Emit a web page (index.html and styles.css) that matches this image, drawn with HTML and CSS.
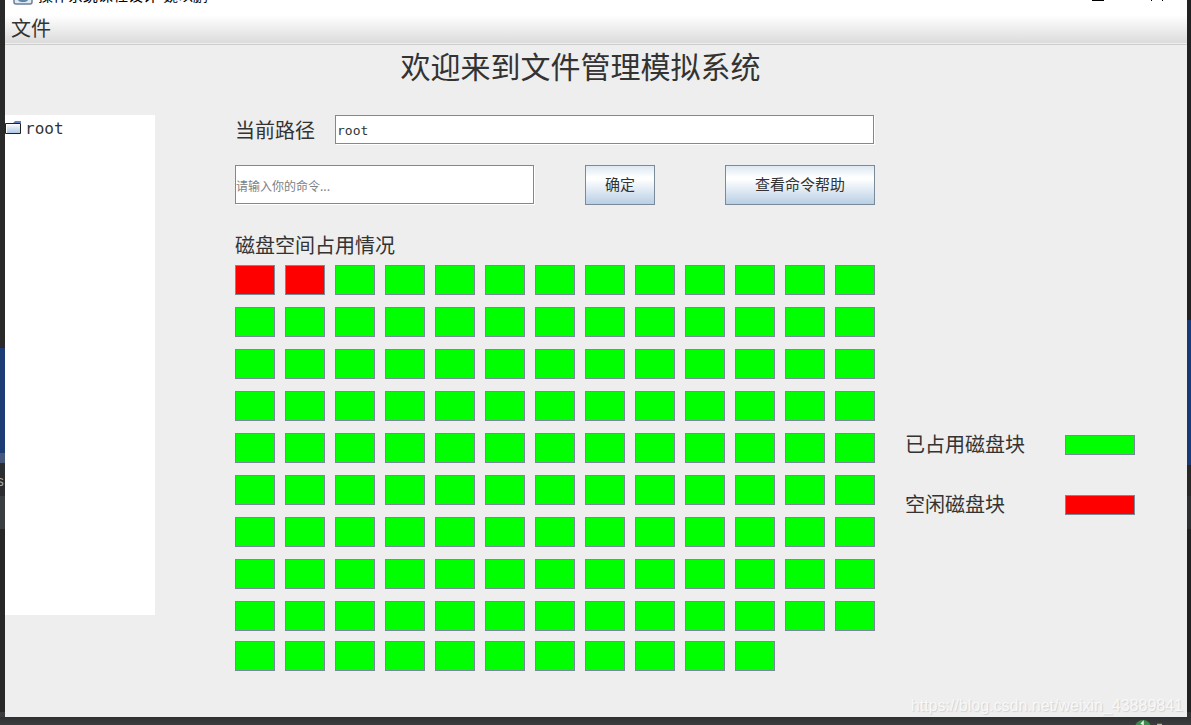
FILE: index.html
```html
<!DOCTYPE html>
<html lang="zh-CN">
<head>
<meta charset="utf-8">
<title>文件管理模拟系统</title>
<link rel="stylesheet" href="styles.css">
</head>
<body>
<div class="desktop">
  <div class="edge edge-left"><span class="edge-char">s</span></div>
  <div class="window">
    <header class="titlebar">
      <svg class="app-icon" width="20" height="20" viewBox="0 0 20 20"><rect x="1" y="1" width="18" height="18" rx="2" fill="#dfe9f2" stroke="#6c8095" stroke-width="1.5"/><path d="M5 12h10v3q-1 2-5 2t-5-2z" fill="#5f86ab"/></svg>
      <span class="app-title">操作系统课程设计-魏以鹏</span>
      <svg class="controls" width="120" height="13" viewBox="0 0 120 13"><path d="M25 12.500h12" stroke="#000" stroke-width="1"/><path d="M84 1l12 12M96 1l-12 12" stroke="#000" stroke-width="1" fill="none"/></svg>
    </header>
    <nav class="menubar"><button class="menu" type="button">文件</button></nav>
    <h1 class="heading">欢迎来到文件管理模拟系统</h1>
    <div class="content">
      <aside class="tree">
        <div class="node">
          <svg width="16" height="14" viewBox="0 0 16 14"><defs><linearGradient id="folder" x1="0" y1="0" x2="0" y2="1"><stop offset="0" stop-color="#fff"/><stop offset="1" stop-color="#a9c6e5"/></linearGradient></defs><path d="M.5 2.500h15v10H.5z" fill="url(#folder)" stroke="#222"/><path d="M8 2l2-2h6v2z" fill="#6382bf"/><path d="M1.500 12V3.500H15" stroke="#fff" fill="none"/></svg>
          <span>root</span>
        </div>
      </aside>
      <main class="panel">
        <div class="path-row">
          <label class="label" for="path">当前路径</label>
          <input class="field" id="path" type="text" value="root">
        </div>
        <form class="command-row">
          <input class="field command" type="text" aria-label="命令" placeholder="请输入你的命令...">
          <button class="btn ok" type="button">确定</button>
          <button class="btn help" type="button">查看命令帮助</button>
        </form>
        <h2 class="label usage">磁盘空间占用情况</h2>
        <div class="blocks" id="blocks"></div>
      </main>
      <ul class="legend">
        <li class="label"><span>已占用磁盘块</span><i class="swatch"></i></li>
        <li class="label"><span>空闲磁盘块</span><i class="swatch red"></i></li>
      </ul>
    </div>
    <span class="watermark">https://blog.csdn.net/weixin_43889841</span>
  </div>
  <div class="edge edge-right"></div>
  <footer class="taskbar">
    <svg width="30" height="8" viewBox="0 0 30 8"><circle cx="8" cy="11" r="8" fill="#3d8b4a"/><path d="M6 7l2-2v3" stroke="#e8f4ea" stroke-width="1.500" fill="none"/><path d="M22 7.500h5" stroke="#b5b2a8" stroke-width="1.500"/></svg>
  </footer>
</div>
<script src="blocks.js"></script>
</body>
</html>
```
FILE: styles.css
```css
* { box-sizing: border-box; }

body {
  margin: 0;
  overflow: hidden;
  background: #3a3c3d;
  color: #333;
  font-family: "Liberation Sans", "Noto Sans CJK SC", sans-serif;
}

button, input { font: inherit; color: inherit; }

.desktop {
  display: grid;
  grid-template-columns: 5px minmax(0, 1fr) 4px;
  grid-template-rows: auto 8px;
  min-height: 100vh;
}

.edge { overflow: hidden; }

.edge-left {
  padding-top: 472px;
  background: linear-gradient(#292929 348px, #1d3c76 348px, #1d3c76 453px, #46587c 453px, #46587c 463px, #2b2e30 463px, #2b2e30 496px, #3b3e40 496px, #3b3e40 529px, #272727 529px, #272727 712px, #3a3c3d 712px);
}

.edge-char {
  display: block;
  color: #aaa;
  font: 14px/20px "Liberation Mono", monospace;
  margin-left: -4px;
}

.edge-right {
  background: linear-gradient(#202122 320px, #193a78 320px, #193a78 465px, #272727 465px, #272727 496px, #2d3032 496px, #2d3032 529px, #202122 529px, #202122 712px, #303234 712px);
}

.window {
  position: relative;
  margin-top: -23px;
  padding-bottom: 46px;
  background: #eee;
}

.titlebar {
  display: flex;
  align-items: center;
  height: 35px;
  padding: 0 0 0 8px;
  background: #fff;
  color: #000;
  font-size: 15px;
}

.app-icon { margin-right: 5px; }

.controls { margin-left: auto; }

.menubar {
  height: 33px;
  background: linear-gradient(#fff 10%, #dadada);
  border-bottom: 1px solid #ccc;
  box-shadow: inset 0 -1px #eee;
}

.menu {
  display: block;
  padding: 2px 6px 0;
  border: 0;
  background: none;
  font-size: 20px;
  line-height: 30px;
}

.heading {
  margin: 0;
  padding: 0 31px 24px 0;
  text-align: center;
  font-size: 30px;
  font-weight: 400;
  line-height: 46px;
}

.content {
  display: grid;
  grid-template-columns: 150px minmax(0, 1fr) 230px;
  align-items: start;
  padding-right: 52px;
}

.tree {
  height: 500px;
  background: #fff;
}

.node {
  display: flex;
  align-items: center;
  gap: 4px;
  height: 26px;
  font-family: "DejaVu Sans Mono", monospace;
  font-size: 16px;
}

.panel { padding: 0 30px 0 80px; }

.path-row, .command-row { display: flex; }

.label {
  font-size: 20px;
  font-weight: 400;
  line-height: 32px;
}

.path-row .label { width: 100px; }

.field {
  flex: 1;
  min-width: 0;
  height: 29px;
  margin: 0 1px 1px 0;
  padding: 1px 1px 0;
  border: 1px solid #7a8a99;
  border-radius: 0;
  outline: 0;
  background: #fff;
  box-shadow: 1px 1px #fff;
  font-family: "DejaVu Sans Mono", "Noto Sans CJK SC", monospace;
  font-size: 13px;
}

.path-row { height: 30px; }

.command-row { margin-top: 20px; }

.command {
  height: 39px;
  padding: 3px 0 0;
}

.command::placeholder {
  color: #808080;
  opacity: 1;
  font: 12px "Noto Sans CJK SC", sans-serif;
}

.btn {
  height: 40px;
  padding: 0 0 3px;
  border: 1px solid #7a8a99;
  border-radius: 0;
  background: linear-gradient(#dde8f3, #fff 30%, #fff 35%, #b8cfe5);
  font-size: 15px;
}

.ok { width: 70px; margin: 0 70px 0 50px; }

.help { width: 150px; }

.usage {
  margin: 20px 0 0;
  padding-top: 2px;
  line-height: 38px;
}

.blocks {
  display: grid;
  grid-template-columns: repeat(13, minmax(0, 1fr));
  grid-template-rows: repeat(8, 42px) 40px 30px;
  column-gap: 10px;
}

.block, .swatch {
  height: 30px;
  border: 1px solid #7a8a99;
  background: #0f0;
}

.legend {
  display: grid;
  gap: 28px;
  margin: 0;
  padding: 314px 0 0;
  list-style: none;
}

.legend .label {
  display: flex;
  align-items: center;
  justify-content: space-between;
}

.swatch { width: 70px; height: 20px; }

.red { background: #f00; }

.watermark {
  position: absolute;
  right: 4px;
  bottom: 1px;
  color: #f8f8f8;
  text-shadow: 1px 1px 1px #d0d0d0;
  font-size: 16px;
  line-height: 20px;
}

.taskbar {
  grid-column: 1 / -1;
  display: flex;
  justify-content: flex-end;
  padding-right: 26px;
  background: linear-gradient(#2e3031, #3a3c3d);
}
```
FILE: blocks.js
```js
const usedBlocks = 2;
const totalBlocks = 128;
const grid = document.getElementById("blocks");

for (let i = 0; i < totalBlocks; i++) {
  const block = document.createElement("div");
  block.className = i < usedBlocks ? "block red" : "block";
  grid.append(block);
}
```
